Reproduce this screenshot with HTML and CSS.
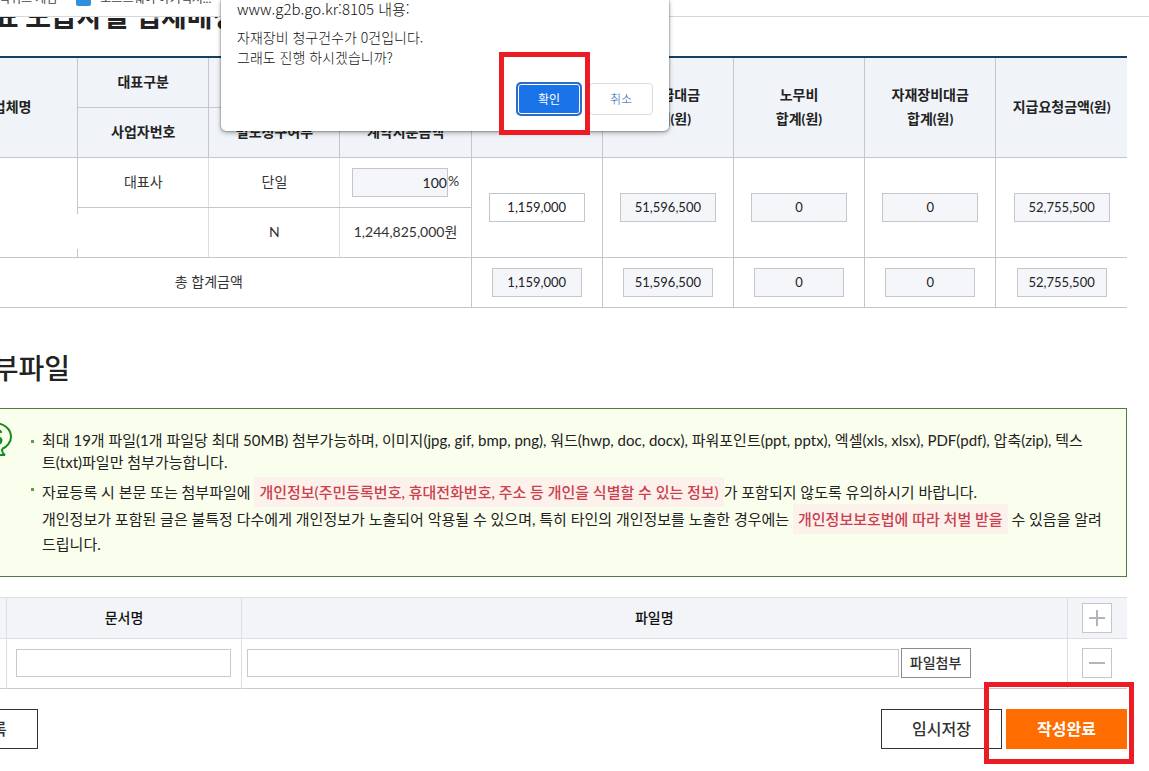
FILE: index.html
```html
<!DOCTYPE html>
<html lang="ko">
<head>
<meta charset="utf-8">
<title>대금청구서 작성</title>
<link rel="stylesheet" href="styles.css">
</head>

<body>
    <!-- 즐겨찾기 바 -->
    <nav class="bookmarks">
        <a class="bm_first" href="#">클릭퀴즈 게임</a>
        <a class="bm_item" href="#"><span class="bm_icon"></span>소프트웨어 아키텍처...</a>
    </nav>

    <div class="contents">
        <h2 class="title strong">대표 도급자별 업체배정</h2>
        <table class="tbl_pay">
            <thead>
                <tr>
                    <th rowspan="2">업체명</th>
                    <th>대표구분</th>
                    <th>계약구분</th>
                    <th>지분율</th>
                    <th rowspan="2">선금<br>합계(원)</th>
                    <th rowspan="2">하도급대금<br>합계(원)</th>
                    <th rowspan="2">노무비<br>합계(원)</th>
                    <th rowspan="2">자재장비대금<br>합계(원)</th>
                    <th rowspan="2">지급요청금액(원)</th>
                </tr>
                <tr>
                    <th>사업자번호</th>
                    <th>별도청구여부</th>
                    <th>계약지분금액</th>
                </tr>
            </thead>
            <tbody>
                <tr>
                    <td rowspan="2"></td>
                    <td>대표사</td>
                    <td class="light">단일</td>
                    <td class="light"><input class="num rate" type="text" value="100" aria-label="지분율" readonly>%</td>
                    <td rowspan="2"><input class="num edit" type="text" value="1,159,000" aria-label="선금"></td>
                    <td rowspan="2"><input class="num" type="text" value="51,596,500" aria-label="하도급대금" readonly></td>
                    <td rowspan="2"><input class="num" type="text" value="0" aria-label="노무비" readonly></td>
                    <td rowspan="2"><input class="num" type="text" value="0" aria-label="자재장비대금" readonly></td>
                    <td rowspan="2"><input class="num" type="text" value="52,755,500" aria-label="지급요청금액" readonly></td>
                </tr>
                <tr>
                    <td class="biz_no"><span class="mask"></span></td>
                    <td class="light">N</td>
                    <td class="light">1,244,825,000원</td>
                </tr>
                <tr class="total">
                    <td colspan="4">총 합계금액</td>
                    <td><input class="num" type="text" value="1,159,000" aria-label="선금 합계" readonly></td>
                    <td><input class="num" type="text" value="51,596,500" aria-label="하도급대금 합계" readonly></td>
                    <td><input class="num" type="text" value="0" aria-label="노무비 합계" readonly></td>
                    <td><input class="num" type="text" value="0" aria-label="자재장비대금 합계" readonly></td>
                    <td><input class="num" type="text" value="52,755,500" aria-label="지급요청금액 합계" readonly></td>
                </tr>
            </tbody>
        </table>

        <h2 class="title title_file">첨부파일</h2>
        <!-- 첨부파일 안내 -->
        <div class="notice">
            <svg class="notice_icon" width="44" height="40" viewBox="0 0 44 40" fill="none" stroke="#168a1c" stroke-width="2">
                <path d="M31 27C36 25 40 20 40 15C40 7 33 1 23 1C13 1 6 7 6 15C6 20 9 25 15 27M31 27C31 30 32 32 34 33L26 33"/>
                <path d="M30 11C29 8 26 8 24 8C20 8 18 10 18 12C18 16 30 14 30 18C30 21 27 22 24 22C21 22 19 21 18 18" stroke-width="3"/>
            </svg>
            <ul class="notice_list">
                <li>최대 19개 파일(1개 파일당 최대 50MB) 첨부가능하며, 이미지(jpg, gif, bmp, png), 워드(hwp, doc, docx), 파워포인트(ppt, pptx), 엑셀(xls, xlsx), PDF(pdf), 압축(zip), 텍스<br>트(txt)파일만 첨부가능합니다.</li>
                <li>
                    <p class="warn">자료등록 시 본문 또는 첨부파일에 <em>개인정보(주민등록번호, 휴대전화번호, 주소 등 개인을 식별할 수 있는 정보)</em>가 포함되지 않도록 유의하시기 바랍니다.</p>
                    <p>개인정보가 포함된 글은 불특정 다수에게 개인정보가 노출되어 악용될 수 있으며, 특히 타인의 개인정보를 노출한 경우에는 <em>개인정보보호법에 따라 처벌 받을</em> 수 있음을 알려드립니다.</p>
                </li>
            </ul>
        </div>

        <table class="tbl_file">
            <colgroup>
                <col class="col_chk">
                <col class="col_doc">
                <col>
                <col class="col_btn">
            </colgroup>
            <thead>
                <tr>
                    <th></th>
                    <th>문서명</th>
                    <th>파일명</th>
                    <th>
                        <button class="btn_icon" type="button" aria-label="추가"><svg width="18" height="18" viewBox="0 0 18 18" stroke="#b0b4bc" stroke-width="2"><path d="M1 9H17M9 1V17"/></svg></button>
                    </th>
                </tr>
            </thead>
            <tbody>
                <tr>
                    <td></td>
                    <td class="doc"><input class="txt" type="text" aria-label="문서명"></td>
                    <td>
                        <div class="file">
                            <input class="txt" type="text" aria-label="파일명">
                            <button class="btn_file" type="button">파일첨부</button>
                        </div>
                    </td>
                    <td>
                        <button class="btn_icon" type="button" aria-label="삭제"><svg width="18" height="18" viewBox="0 0 18 18" stroke="#b0b4bc" stroke-width="2"><path d="M1 9H17"/></svg></button>
                    </td>
                </tr>
            </tbody>
        </table>

        <div class="btns">
            <button class="btn btn_list" type="button">목록</button>
            <div class="btns_right">
                <button class="btn" type="button">임시저장</button>
                <div class="marked">
                    <button class="btn btn_done" type="button">작성완료</button>
                    <span class="mark"></span>
                </div>
            </div>
        </div>
    </div>

    <!-- 확인창 -->
    <div class="dialog" role="dialog" aria-label="확인">
        <p class="dialog_host">www.g2b.go.kr:8105 내용:</p>
        <p class="dialog_msg">자재장비 청구건수가 0건입니다.<br>그래도 진행 하시겠습니까?</p>
        <div class="dialog_btns">
            <button class="d_cancel" type="button">취소</button>
            <div class="marked">
                <button class="d_ok" type="button">확인</button>
                <span class="mark"></span>
            </div>
        </div>
    </div>
</body>
</html>
```

FILE: styles.css
```css
*{
    margin: 0;
    padding: 0;
    box-sizing: border-box;
}
body{
    min-height: 100vh;
    background-color: #fff;
    color: #333;
    font: 14px/24px Lato, "Noto Sans CJK KR", sans-serif;
}
button, input{
    font: inherit;
    color: inherit;
}
table{
    width: 100%;
    border-collapse: collapse;
    table-layout: fixed;
}

/* 즐겨찾기 바 */
.bookmarks{
    position: absolute;
    top: 0;
    left: 0;
    right: 0;
    height: 17px;
    display: flex;
    gap: 19px;
    overflow: hidden;
    background-color: #fff;
    border-bottom: 1px solid #d5d7da;
    z-index: 1;
}
.bookmarks a{
    display: flex;
    gap: 9px;
    margin-top: -11px;
    color: #444;
    font-size: 12px;
    line-height: 20px;
    text-decoration: none;
    white-space: nowrap;
}
.bm_first{
    margin-left: -12px;
}
.bm_icon{
    width: 15px;
    height: 17px;
    border-radius: 2px;
    background-color: #2e8fdc;
}

.contents{
    margin: 0 22px 0 -54px;
    padding-bottom: 22px;
}
.title{
    padding-left: 21px;
    margin-bottom: 24px;
    color: #222;
    font-size: 28px;
    font-weight: 500;
    line-height: 32px;
}
.title.strong{
    font-weight: 700;
}
.title_file{
    margin-top: 44px;
}

/* 대금 표 */
.tbl_pay{
    border-top: 2px solid #15405f;
}
.tbl_pay th, .tbl_pay td{
    height: 50px;
    border-left: 1px solid #c3c6ca;
    border-bottom: 1px solid #c3c6ca;
    text-align: center;
    vertical-align: middle;
}
.tbl_pay th{
    background-color: #f0f4f8;
    color: #222;
    font-weight: 700;
}
.tbl_pay td.light{
    border-left-color: #dcdee1;
}
.num{
    width: 96px;
    height: 29px;
    border: 1px solid #c3c6ca;
    background-color: #f4f6fa;
    color: #222;
    font-size: 13px;
    text-align: center;
    vertical-align: middle;
}
.num.edit{
    background-color: #fff;
}
.num.rate{
    font-size: 14px;
    text-align: right;
}
.total .num{
    width: 90px;
}
.biz_no{
    position: relative;
}
.mask{
    position: absolute;
    top: 6px;
    left: -4px;
    right: 10px;
    height: 35px;
    background-color: #fff;
}

/* 첨부파일 안내 */
.notice{
    display: flex;
    padding: 20px 18px 19px 0;
    border: 1px solid #4e7d40;
    background-color: #fafeed;
    color: #222;
    font-size: 15px;
    line-height: 22px;
    word-break: break-all;
}
.notice_icon{
    flex: none;
    width: 44px;
    height: 40px;
    margin: -7px 0 0 24px;
}
.notice_list{
    flex: 1;
    list-style: none;
    margin-left: 14px;
}
.notice_list li{
    position: relative;
    padding-left: 13px;
}
.notice_list li + li{
    margin-top: 4px;
}
.notice_list li::before{
    content: "";
    position: absolute;
    top: 11px;
    left: 2px;
    width: 3px;
    height: 3px;
    background-color: #5f9a4f;
}
.notice_list p{
    line-height: 25px;
}
.notice_list .warn{
    line-height: 30px;
}
.notice em{
    padding: 6px 5px;
    background-color: #fdf1ec;
    color: #c9414f;
    font-style: normal;
    font-weight: 500;
}

/* 파일 표 */
.tbl_file{
    margin-top: 20px;
    border-top: 1px solid #dcdee3;
    border-bottom: 1px solid #c8cacd;
}
.col_chk{
    width: 60px;
}
.col_doc{
    width: 235px;
}
.col_btn{
    width: 60px;
}
.tbl_file th, .tbl_file td{
    border-left: 1px solid #dcdee3;
    text-align: center;
    vertical-align: middle;
}
.tbl_file th{
    height: 41px;
    border-bottom: 1px solid #dcdee3;
    background-color: #f2f4f8;
    color: #111;
    font-weight: 500;
}
.tbl_file td{
    height: 50px;
    padding: 0 5px;
}
.tbl_file td.doc{
    padding: 0 10px 0 9px;
}
.txt{
    display: block;
    width: 100%;
    height: 28px;
    border: 1px solid #c8cacd;
    background-color: #fff;
}
.file{
    display: flex;
    align-items: center;
    gap: 2px;
}
.file .txt{
    width: 80%;
}
.btn_file{
    width: 70px;
    height: 30px;
    border: 1px solid #8a8c90;
    background-color: #fff;
    font-weight: 500;
}
.btn_icon{
    display: inline-flex;
    align-items: center;
    justify-content: center;
    width: 30px;
    height: 30px;
    border: 1px solid #c3c6ce;
    background-color: #fff;
    vertical-align: middle;
}

/* 하단 버튼 */
.btns{
    display: flex;
    justify-content: space-between;
    margin-top: 20px;
}
.btns_right{
    display: flex;
    gap: 4px;
}
.btn{
    display: block;
    width: 121px;
    height: 40px;
    border: 1px solid #333;
    background-color: #fff;
    font-size: 16px;
    font-weight: 500;
}
.btn_list{
    width: 92px;
}
.btn_done{
    border-color: #ff6c00;
    background-color: #ff6c00;
    color: #fff;
    font-weight: 700;
}

/* 강조 테두리 */
.marked{
    position: relative;
}
.mark{
    position: absolute;
    top: -27px;
    left: -22px;
    right: -7px;
    bottom: -15px;
    border: 5px solid #eb1c24;
    pointer-events: none;
}

/* 확인창 */
.dialog{
    position: absolute;
    top: 0;
    left: 221px;
    width: 448px;
    padding: 0 16px 16px;
    border-radius: 0 0 5px 5px;
    background-color: #fff;
    box-shadow: 0 0 2px rgba(0, 0, 0, 0.6), 0 2px 5px rgba(0, 0, 0, 0.3);
    color: #111;
    font-family: "Noto Sans CJK KR", sans-serif;
    font-size: 14px;
    font-weight: 300;
    line-height: 20px;
    z-index: 2;
}
.dialog_host{
    margin-bottom: 9px;
    font-size: 15px;
    line-height: 18px;
}
.dialog_btns{
    display: flex;
    flex-direction: row-reverse;
    gap: 8px;
    margin-top: 16px;
}
.dialog_btns button{
    display: block;
    width: 64px;
    height: 32px;
    border: 1px solid #dadce0;
    border-radius: 4px;
    background-color: #fff;
    color: #1a5fb8;
    font-size: 12px;
}
.dialog_btns .d_ok{
    border-color: #2a6cc8;
    background-color: #1a73e8;
    box-shadow: 0 0 0 1px #2a6cc8, inset 0 0 0 1px #fff;
    color: #fff;
    font-weight: 400;
}
.dialog .mark{
    top: -31px;
    left: -18px;
    right: -9px;
    bottom: -20px;
}
```
